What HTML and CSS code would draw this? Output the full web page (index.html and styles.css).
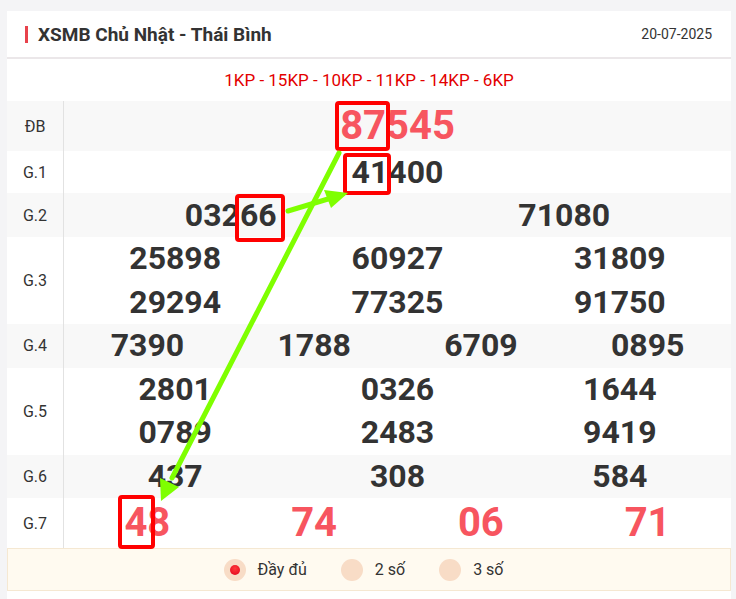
FILE: index.html
```html
<!DOCTYPE html>
<html lang="vi">

<head>
    <meta charset="UTF-8">
    <meta name="viewport" content="width=device-width, initial-scale=1.0">
    <title>XSMB Chủ Nhật - Thái Bình</title>
    <link rel="stylesheet" href="styles.css">
</head>

<body>

    <div class="khung">
        <div class="tieu-de">
            <h2>XSMB Chủ Nhật - Thái Bình</h2>
            <span class="ngay">20-07-2025</span>
        </div>
        <div class="ma-db">1KP - 15KP - 10KP - 11KP - 14KP - 6KP</div>

        <div class="bang">
            <div class="hang xam">
                <div class="giai">ĐB</div>
                <div class="so cot-1 lon do"><span>87545</span></div>
            </div>
            <div class="hang g1">
                <div class="giai">G.1</div>
                <div class="so cot-1"><span>41400</span></div>
            </div>
            <div class="hang xam g2">
                <div class="giai">G.2</div>
                <div class="so cot-2"><span>03266</span><span>71080</span></div>
            </div>
            <div class="hang">
                <div class="giai">G.3</div>
                <div class="so cot-3">
                    <span>25898</span><span>60927</span><span>31809</span>
                    <span>29294</span><span>77325</span><span>91750</span>
                </div>
            </div>
            <div class="hang xam">
                <div class="giai">G.4</div>
                <div class="so cot-4"><span>7390</span><span>1788</span><span>6709</span><span>0895</span></div>
            </div>
            <div class="hang">
                <div class="giai">G.5</div>
                <div class="so cot-3">
                    <span>2801</span><span>0326</span><span>1644</span>
                    <span>0789</span><span>2483</span><span>9419</span>
                </div>
            </div>
            <div class="hang xam">
                <div class="giai">G.6</div>
                <div class="so cot-3"><span>437</span><span>308</span><span>584</span></div>
            </div>
            <div class="hang">
                <div class="giai">G.7</div>
                <div class="so cot-4 lon do"><span>48</span><span>74</span><span>06</span><span>71</span></div>
            </div>
        </div>

        <div class="loc">
            <label class="chon"><span class="nut bat"></span>Đầy đủ</label>
            <label class="chon"><span class="nut"></span>2 số</label>
            <label class="chon"><span class="nut"></span>3 số</label>
        </div>
    </div>

    <svg class="ghi-chu" width="736" height="599" viewBox="0 0 736 599">
        <g fill="none" stroke="#ff0000" stroke-width="4">
            <rect x="337" y="103" width="51" height="46" rx="2" />
            <rect x="345" y="155" width="44" height="38" rx="2" />
            <rect x="237" y="196" width="46" height="44" rx="2" />
            <rect x="120" y="497" width="33" height="50" rx="2" />
        </g>
        <g stroke="#7fff00" stroke-width="5" stroke-linecap="round">
            <line x1="288" y1="211" x2="328" y2="199" />
            <line x1="339" y1="153" x2="172" y2="478" />
        </g>
        <g fill="#7fff00">
            <polygon points="348,193 324,190 331,208" />
            <polygon points="161,501 160,478 179,487" />
        </g>
    </svg>

</body>

</html>
```

FILE: styles.css
```css
body {
    margin: 0;
    background-color: #f4f4f6;
    font-family: Roboto, "Liberation Sans", sans-serif;
    color: #333;
}

.khung {
    margin: 11px 5px 0 7px;
    background-color: #fff;
    padding-bottom: 10px;
}

.tieu-de {
    display: flex;
    align-items: center;
    justify-content: space-between;
    height: 46px;
    padding: 0 19px 0 18px;
    border-bottom: 2px solid #ebe7e9;
}

.tieu-de h2 {
    margin: 0;
    font-size: 19px;
    font-weight: bold;
    color: #333;
    border-left: 3px solid #e8424c;
    padding-left: 10px;
    line-height: 17px;
}

.ngay {
    font-size: 14px;
}

.ma-db {
    height: 42px;
    line-height: 42px;
    text-align: center;
    color: #e30000;
    font-size: 17px;
}

.hang {
    display: flex;
}

.xam {
    background-color: #f8f8f8;
}

.giai {
    width: 56px;
    border-right: 1px solid #e2e2e2;
    display: flex;
    align-items: center;
    justify-content: center;
    font-size: 16px;
}

.so {
    flex: 1;
    display: grid;
    text-align: center;
    font-size: 32px;
    font-weight: bold;
    line-height: 43.5px;
}

.g1 .so {
    line-height: 42px;
}

.g2 .so {
    line-height: 44px;
}

.cot-1 { grid-template-columns: 1fr; }
.cot-2 { grid-template-columns: repeat(2, 1fr); }
.cot-3 { grid-template-columns: repeat(3, 1fr); }
.cot-4 { grid-template-columns: repeat(4, 1fr); }

.lon {
    font-size: 40px;
    line-height: 50px;
}

.do {
    color: #f7555f;
}

.loc {
    display: flex;
    justify-content: center;
    align-items: center;
    height: 41px;
    padding-right: 11px;
    background-color: #fffaf0;
    border: 1px solid #f5e8d2;
    font-size: 16px;
}

.chon {
    display: flex;
    align-items: center;
    margin: 0 17px;
}

.nut {
    width: 22px;
    height: 22px;
    border-radius: 50%;
    background-color: #f8dcc6;
    margin-right: 12px;
    display: flex;
    align-items: center;
    justify-content: center;
}

.bat::after {
    content: "";
    width: 10px;
    height: 10px;
    border-radius: 50%;
    background: radial-gradient(circle at 50% 35%, #ff3a3a, #e0001a);
}

.ghi-chu {
    position: absolute;
    top: 0;
    left: 0;
    pointer-events: none;
}
```
